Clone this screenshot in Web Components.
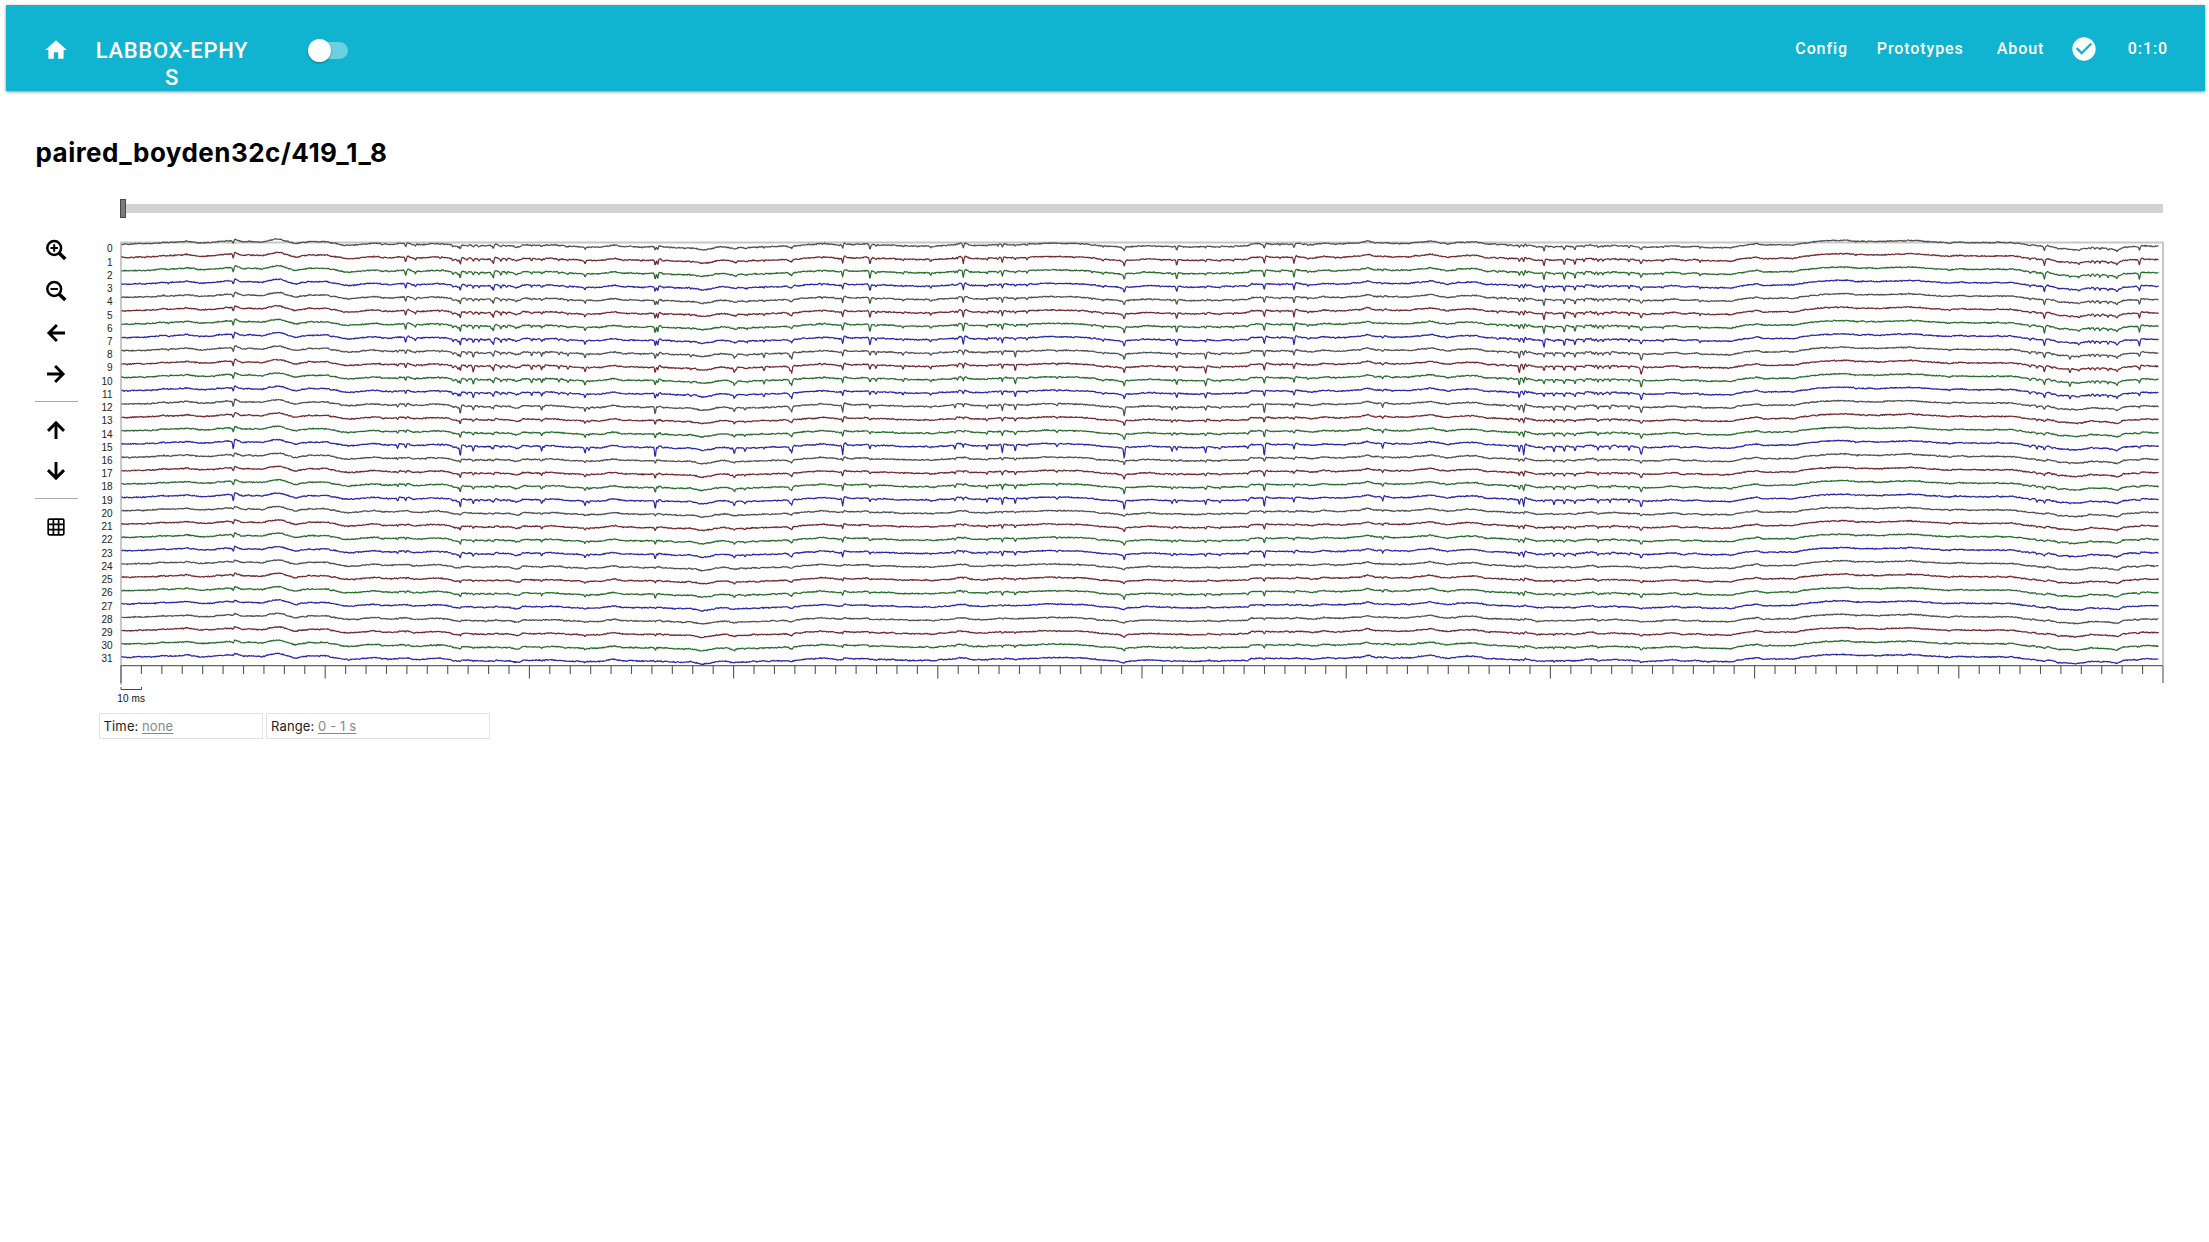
<!DOCTYPE html>
<html lang="en">
<head>
<meta charset="utf-8">
<title>labbox-ephys</title>
<style>
html,body{margin:0;background:#fff;height:100%;overflow:hidden}
body{font-family:Inter,"Liberation Sans",sans-serif;color:#000}
</style>
</head>
<body>
<ephys-app></ephys-app>
<script>
const define = (name, html, init) => customElements.define(name, class extends HTMLElement {
  constructor() {
    super();
    this.attachShadow({mode: 'open'}).innerHTML = html;
  }
  connectedCallback() { if (init) init(this.shadowRoot, this); }
});

const ICONS = {
  home: '<path fill="currentColor" d="M10 20v-6h4v6h5v-8h3L12 3 2 12h3v8z"/>',
  check: '<path fill="currentColor" d="M12 2C6.480 2 2 6.480 2 12s4.480 10 10 10 10-4.480 10-10S17.520 2 12 2zm-2 15l-5-5 1.410-1.410L10 14.170l7.590-7.590L19 8l-9 9z"/>',
  plus: '<g fill="none" stroke="currentColor"><circle cx="10.200" cy="10" r="6.900" stroke-width="2.500"/><path stroke-width="3.500" d="M15.300 15.200l6 5.900"/><path stroke-width="2" d="M6.500 10h7.400M10.200 6.300v7.400"/></g>',
  minus: '<g fill="none" stroke="currentColor"><circle cx="10.200" cy="10" r="6.900" stroke-width="2.500"/><path stroke-width="3.500" d="M15.300 15.200l6 5.900"/><path stroke-width="2" d="M6.500 10h7.400"/></g>',
  left: '<path fill="none" stroke="currentColor" stroke-width="2.900" d="M21 12H5M12.900 4L4.900 12l8 8"/>',
  right: '<path fill="none" stroke="currentColor" stroke-width="2.900" d="M3 12H19M11.100 4l8 8-8 8"/>',
  up: '<path fill="none" stroke="currentColor" stroke-width="2.900" d="M12 21V5M4 12.900L12 4.900l8 8"/>',
  down: '<path fill="none" stroke="currentColor" stroke-width="2.900" d="M12 3V19M4 11.100l8 8 8-8"/>',
  grid: '<g fill="none" stroke="currentColor" stroke-width="1.700"><rect x="4.200" y="4.200" width="15.600" height="15.600" rx="1.200"/><path d="M9.400 4v16M14.600 4v16M4 9.400h16M4 14.600h16"/></g>'
};
define('app-icon', `<style>:host{display:block;width:24px;height:24px;flex:none}svg{display:block;width:100%;height:100%}</style><svg viewBox="0 0 24 24"></svg>`,
  (root, el) => { root.querySelector('svg').innerHTML = ICONS[el.getAttribute('name')]; });

define('toggle-switch', `<style>
:host{display:flex;align-items:center;width:41px;height:23px}
.track{box-sizing:border-box;width:34px;height:17px;margin:0 0 0 6px;border-radius:9px;background:rgba(255,255,255,.38);display:flex;align-items:center}
.knob{width:23px;height:23px;border-radius:50%;background:#fff;margin-left:-6px;flex:none;box-shadow:0 1px 2px rgba(0,0,0,.35)}
</style><div class="track"><div class="knob"></div></div>`);

define('top-bar', `<style>
:host{box-sizing:border-box;display:flex;height:86px;margin:5px 4px 0 5.500px;background:#10b4d0;color:#fff;font-family:Roboto,sans-serif;
 box-shadow:0 1px 3px rgba(0,0,0,.45);padding:0 37px 0 37px}
.home{width:26px;height:26px;margin-top:31.500px}
.brand{width:156px;margin:31.500px 0 0 25.500px;text-align:center;font-size:22px;font-weight:500;line-height:27px;letter-spacing:.68px;word-break:break-all}
toggle-switch{margin:34px 0 0 57.500px}
nav{margin-left:auto;display:flex;font-size:16px;font-weight:500;letter-spacing:.9px;line-height:20px;padding-top:33.500px}
.status{width:28px;height:28px;margin:-3.500px 0 0}
</style>
<app-icon class="home" name="home"></app-icon>
<div class="brand">LABBOX-EPHYS</div>
<toggle-switch></toggle-switch>
<nav><span style="width:81.500px">Config</span><span style="width:120px">Prototypes</span><span style="width:73px">About</span><app-icon class="status" name="check"></app-icon><span style="margin-left:30px">0:1:0</span></nav>`);

define('tool-bar', `<style>
:host{display:flex;flex-direction:column;align-items:center;width:43px;padding-top:39.300px}
app-icon{margin:0 1px 17.200px 0}
hr{width:43px;height:1px;border:0;background:#aaa;margin:-2px 0 16px}
</style>
<app-icon name="plus"></app-icon><app-icon name="minus"></app-icon><app-icon name="left"></app-icon><app-icon name="right"></app-icon>
<hr><app-icon name="up"></app-icon><app-icon name="down"></app-icon><hr><app-icon name="grid"></app-icon>`);

define('time-slider', `<style>
:host{display:flex;flex:none;align-items:center;height:19px;width:2043px}
.handle{box-sizing:border-box;width:6px;height:19px;background:#7b7b7b;border:1px solid #484848}
.track{flex:1;height:9px;background:#d3d3d3}
</style><div class="handle"></div><div class="track"></div>`);

/* Slow drift shared by every channel: x, y pairs of channel 1. */
const DRIFT = [];
const seg = (ox, sx, oy, list) => { for (let i = 0; i < list.length; i += 2) DRIFT.push([ox + list[i] / sx, oy + list[i + 1] / 3]); };
seg(120, 3, 225, [0,98,50,96,100,95,140,92,200,89,235,94,280,91,335,86,345,82,362,90,430,90,450,85,467,83,490,85,525,95,570,90,620,89,640,94,670,99,700,101,730,98,765,94,785,98,820,98,860,94,880,99,910,98,965,95,990,100,1010,103,1025,101,1100,102,1130,100,1160,101,1195,107,1207,100,1300,101,1395,107,1440,106,1478,100,1510,104,1545,104]);
seg(640, 3, 225, [0,106,30,105,60,104,70,107,150,108,187,115,225,108,255,105,280,110,300,108,370,106,440,104,455,107,465,103,545,95,600,100,613,95,640,99,680,97,700,101,800,102,880,103,940,99,955,95,975,95,990,101,1010,102,1080,98,1110,99,1150,98,1240,94,1330,97,1380,102,1410,103,1450,109,1460,106,1530,101,1550,103]);
seg(1160, 3, 225, [0,103,50,105,80,106,130,105,200,105,260,103,275,96,310,98,320,96,390,98,410,96,470,99,490,95,540,98,600,94,622,89,650,94,675,92,700,96,760,94,808,88,850,95,865,97,890,93,925,90,950,92,980,97,1050,100,1085,101,1095,98,1130,106,1160,104,1250,105,1280,101,1300,99,1315,104,1350,101,1380,103,1420,103,1443,108,1460,106,1500,106,1537,101,1555,104]);
seg(1680, 2.964, 190, [15,211,50,208,70,212,150,213,200,204,228,201,250,206,300,204,335,205,400,195,490,190,520,194,600,194,680,191,800,199,830,196,870,198,980,198,1030,205,1080,209,1090,207,1120,215,1180,219,1220,213,1280,217,1295,221,1315,212,1350,210,1358,212,1366,208,1418,209]);

/* Spikes: x, then the depth on the upper, middle and lower electrode groups. */
const SPIKES = [[168.500,1,1,.5],[233.300,5,5,8],[397.700,0,1.500,4],[405.700,6,4,4],[415.500,2.500,1,0],[440,1.500,1.500,1],[453,2,2,1],[458,2,3,2],[460.300,6,5,10],[467,2,2,1],[473.300,3,6,5],[479,2,1,1],[493.300,6,5,3],[491.500,3,2,2],[501,3,2,1],[506.500,2,1.500,1],[516,1.500,1,1],[531.700,2,4,1],[536,1,1.500,0],[541.700,2,4,5],[544,1,2,2],[559,1.500,3,0],[568,1.500,3,0],[585,3,4,5],[589,0,1,3],
[655.200,6,6,10],[657.700,6,4,3],[690.700,1.500,2.500,0],[734.300,1,4,5],[736,1.500,2,1],[745,1,1,3],[747,1.500,1,0],[764,1.500,4,1],[791.700,2,6,6],[790,1,3,3],[822,1,1,0],[842.700,6,5,10],[870,7,4,4],[876,1.500,3,1],[903,1.500,3,1],[930.700,2,2,1],[955,1.500,1,4],[957.500,2,3,0],[963.300,7,4,3],[987,1.500,1,4],[998,2,1,1],[1002.300,5,4,8],[1015.300,1.500,6,6],[1027,2,1,1],[1057,0,1.500,3],[1092,1.500,0,0],[1103,2,1.500,0],[1124.300,5,5,10],
[1172,1,1,4],[1176.700,6,5,3],[1205.700,1.500,6,5],[1220,.5,1,2],[1233,1.500,1,0],[1248,0,0,2],[1264.300,6,6,11],[1280,1.500,1,0],[1294,7,5,5],[1308,1.500,1,0],[1382.700,1,2,5],[1497.700,1.500,1,0],[1508,1,1,1],[1519.300,3,7,6],[1523.700,4,5,10],[1527,2,2,1],[1544,7,4,2],[1554,1,3,5],[1564.300,6,4,5],[1575,5,4,4],[1584,2.500,2,1],[1592.500,2,2,1],[1594.500,2,2,1],[1598,2,2,3],[1603,2,2,1],[1610,1.500,3,4],[1618,1,1,1],[1629,3,2,4],[1641,3,6,6],[1642,1,3,3],[1663,1.500,1,0],
[1700,2,1,0],[2030,1.500,2,1],[2037,1,2,3],[2044.400,6,5,3],[2052,0,1,1],[2070,1,4,1],[2079,1.500,1,0],[2090.500,2,2,0],[2095,2,2,0],[2100,2,1.500,0],[2108,2,2,0],[2117,2,2,1],[2139.500,6,4,2]];
const TOP = [.6,.9,1,.8,.8,.9,1,1];
const MID = [.9,1,.9,.8];
const LOW = [.75,.4,.5,1,.3,.45,.55,.8,.15,.35,.4,.5,.1,.22,.38,.1,.1,.18,.25,.12];
const COLORS = ['#505050', '#712a2f', '#296c2e', '#2a2aa0'];

define('trace-plot', `<style>
:host{display:block;width:2076px;height:475px}
svg{display:block;overflow:visible;font:10px "Liberation Sans",sans-serif}
path{fill:none}
</style><svg width="2076" height="475" viewBox="99 232 2076 475"></svg>`, root => {
  let seed = 7;
  const rnd = () => (seed = (seed * 16807) % 2147483647) / 2147483647 - .5;
  const STEP = .6, X0 = 121.500, X1 = 2158.500, n = Math.floor((X1 - X0) / STEP) + 1;
  const base = [], common = [];
  let k = 0, slow = 0;
  for (let i = 0; i < n; i++) {
    const x = X0 + i * STEP;
    while (k < DRIFT.length - 2 && DRIFT[k + 1][0] < x) k++;
    const [xa, ya] = DRIFT[k], [xb, yb] = DRIFT[k + 1];
    base.push(ya + (yb - ya) * Math.min(1, Math.max(0, (x - xa) / (xb - xa))));
    slow = slow * .86 + rnd() * .36;
    common.push(slow + rnd() * .2);
  }
  const EXTRA = [[121,0],[233,1.300],[350,1.500],[450,2],[510,2.400],[600,1.400],[1000,1.400],[1500,1.500],[1800,1],[2040,1.500],[2100,.4],[2160,0]];
  const extra = x => {
    let j = 0; while (j < EXTRA.length - 2 && EXTRA[j + 1][0] < x) j++;
    const [a, b] = EXTRA[j], [c, d] = EXTRA[j + 1];
    return b + (d - b) * (x - a) / (c - a);
  };
  let out = '<path stroke="#c8c8c8" stroke-width="2" d="M121 685V242.500H2163V665"/>';
  for (let c = 0; c < 32; c++) {
    let d = '', own = 0;
    for (let i = 0; i < n; i++) {
      const x = X0 + i * STEP;
      own = own * .8 + rnd() * .32;
      let y = base[i] + (c - 1) * 13.320 + extra(x) * c / 31 + common[i] + own + rnd() * .85;
      for (const s of SPIKES) {
        const dx = x - s[0];
        if (dx < -2 || dx > 9) continue;
        const amp = c < 8 ? s[1] * TOP[c] : c < 12 ? s[2] * MID[c - 8] : s[3] * LOW[c - 12];
        y += amp * (Math.exp(-dx * dx / .7) - (dx > 0 ? .12 * Math.exp(-Math.pow((dx - 2.500) / 2, 2)) : 0));
      }
      d += (i ? 'L' : 'M') + x.toFixed(1) + ' ' + y.toFixed(2);
    }
    out += `<path stroke="${COLORS[c % 4]}" stroke-width="1.220" stroke-linejoin="round" d="${d}"/>`;
    out += `<text x="112.500" y="${(252.300 + c * 13.230).toFixed(1)}" text-anchor="end" fill="#222">${c}</text>`;
  }
  out += '<path stroke="#666" stroke-width="1.200" d="M121 665.700H2163"/>';
  let ticks = '';
  for (let i = 0; i <= 100; i++) {
    const end = i % 100 === 0 ? 683 : i % 10 === 0 ? 678.500 : 674;
    ticks += `M${(121 + i * 20.420).toFixed(2)} 665.500V${end}`;
  }
  out += `<path stroke="#555" stroke-width="1.100" d="${ticks}"/>`;
  out += '<path stroke="#444" stroke-width="1" d="M121 687V689.500H141.500V687"/>';
  out += '<text x="131.200" y="701.500" text-anchor="middle" fill="#111" letter-spacing=".1">10 ms</text>';
  root.querySelector('svg').innerHTML = out;
});

define('info-box', `<style>
:host{box-sizing:border-box;display:flex;align-items:center;height:26px;border:1.500px solid #e2e2e2;padding-left:4px;font-size:13px;letter-spacing:.15px;color:#222;gap:3.500px;white-space:nowrap}
.v{color:#888;text-decoration:underline;text-underline-offset:2px}
</style><span><slot></slot></span><span class="v"><slot name="value"></slot></span>`);

define('ephys-app', `<style>
:host{display:block;width:2209px}
h1{margin:43px 0 0 35.500px;font-size:26px;line-height:38px;font-weight:700;color:#000;letter-spacing:.46px}
main{display:flex;margin:27px 0 0 35px}
section{display:flex;flex-direction:column}
time-slider{margin-left:21px}
.work{margin-left:21px}
trace-plot{margin-top:14px}
.info{display:flex;gap:3px;margin:5.500px 0 0 -.5px}
</style>
<top-bar></top-bar>
<h1>paired_boyden32c/419_1_8</h1>
<main><tool-bar></tool-bar>
<section class="work"><time-slider></time-slider><trace-plot></trace-plot>
<div class="info"><info-box style="width:164.500px">Time:<span slot="value">none</span></info-box><info-box style="width:224px">Range:<span slot="value">0 - 1 s</span></info-box></div></section></main>`);
</script>
</body>
</html>
